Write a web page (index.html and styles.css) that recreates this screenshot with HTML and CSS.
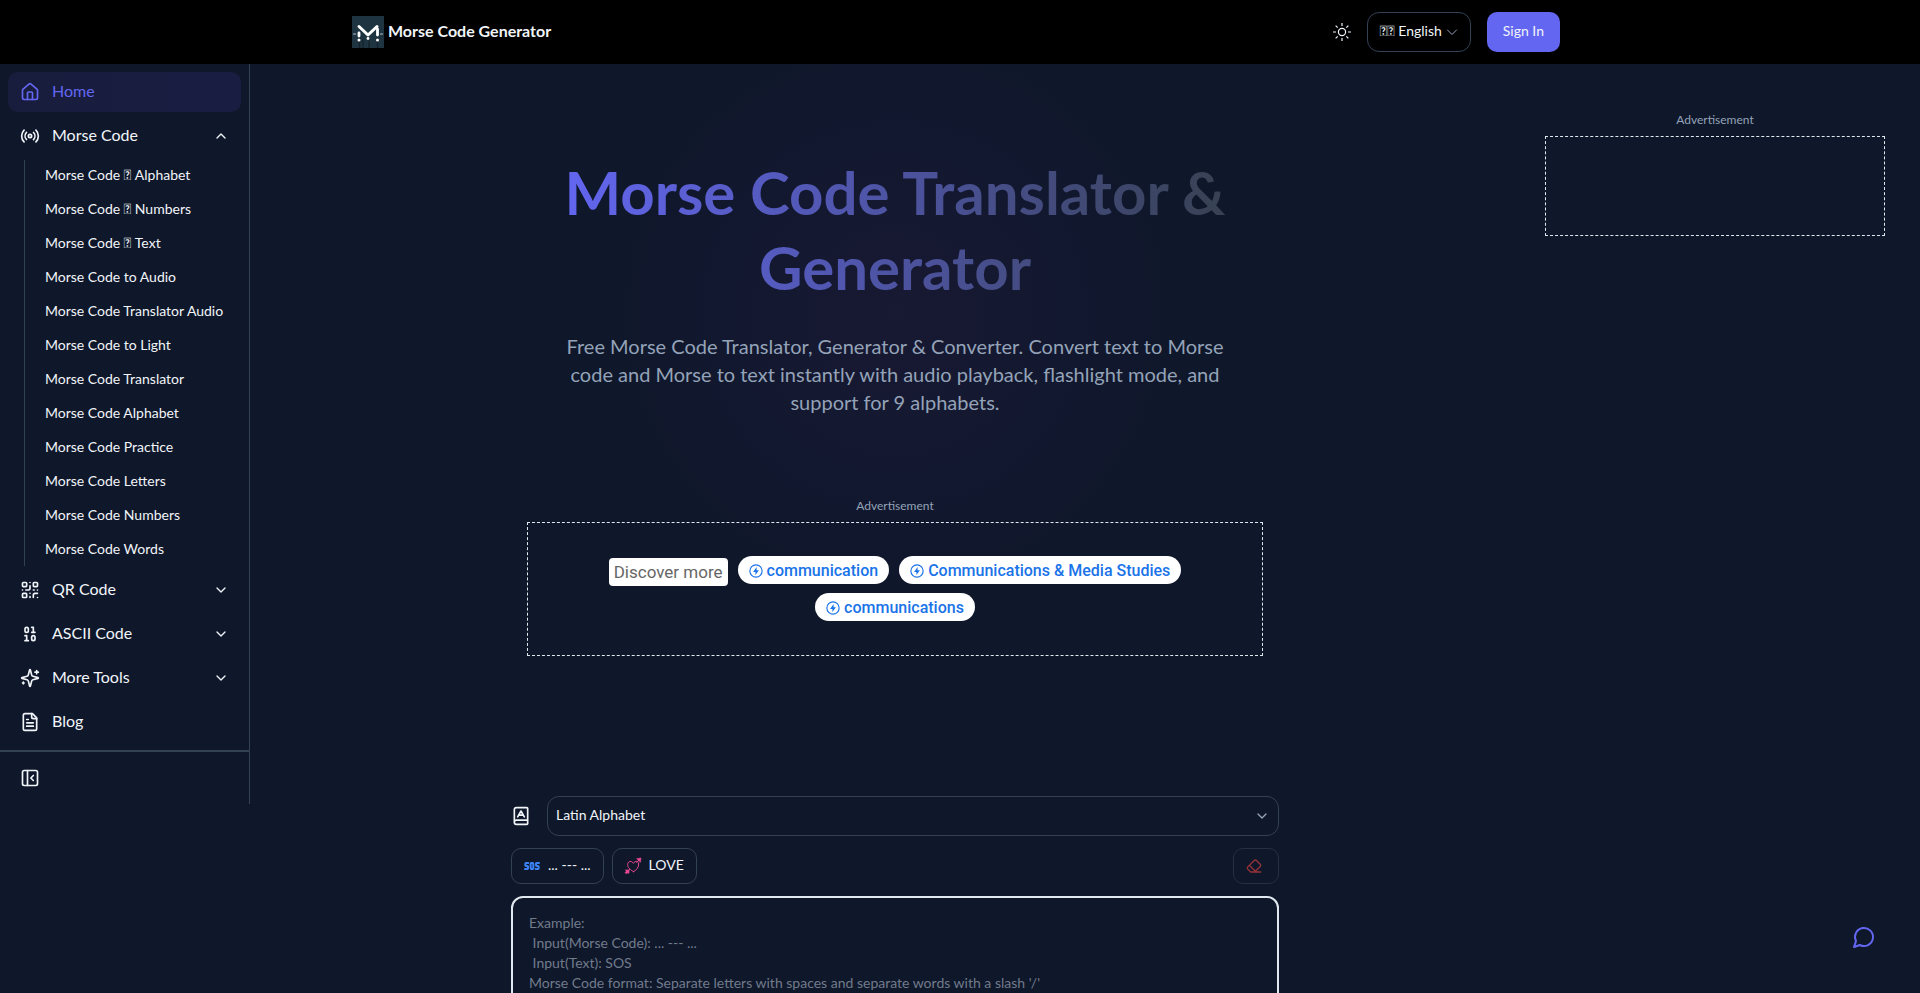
FILE: index.html
```html
<!DOCTYPE html>
<html lang="en">
<head>
<meta charset="utf-8">
<meta name="viewport" content="width=device-width, initial-scale=1">
<title>Morse Code Translator &amp; Generator</title>
<link rel="stylesheet" href="styles.css">
</head>
<body>

<header class="header">
  <div class="header-inner">
    <a href="#" class="brand">
      <svg class="brand-logo" viewBox="0 0 32 32" aria-hidden="true">
        <rect width="32" height="32" fill="#1e3441"/>
        <path d="M7.500 21v11M11 24v8M17 25v7M25.500 21v11" stroke="#14232e" stroke-width="1.500"/>
        <g fill="none" stroke="#fff" stroke-linecap="round">
          <path d="M7 10.500l9 8.500 9-8.500" stroke-width="3"/>
          <path d="M7 17v3M25.500 13v6" stroke-width="2.800"/>
          <path d="M1.500 18h2M28.500 18h2" stroke="#b9c5cc" stroke-width="1.200"/>
        </g>
        <g fill="#fff">
          <circle cx="7" cy="24" r="1.500"/>
          <circle cx="16" cy="22.500" r="1.400"/>
          <circle cx="25.500" cy="24" r="1.500"/>
        </g>
      </svg>
      <span>Morse Code Generator</span>
    </a>
    <div class="header-actions">
      <button type="button" class="theme-button" aria-label="Toggle theme">
        <svg class="icon-18" viewBox="0 0 15 15">
          <circle cx="7.500" cy="7.500" r="3"/>
          <path d="M7.500 0v2.500M7.500 12.500V15M0 7.500h2.500M12.500 7.500H15M2.200 2.200l1.700 1.700M11.100 11.100l1.700 1.700M2.200 12.800l1.700-1.700M11.100 3.900l1.700-1.700"/>
        </svg>
      </button>
      <button type="button" class="language-button">
        <span>&#x10F000;&#x10F000; English</span>
        <svg class="icon-12" viewBox="0 0 24 24"><path d="m3 8 9 9 9-9"/></svg>
      </button>
      <button type="button" class="signin-button">Sign In</button>
    </div>
  </div>
</header>

<div class="layout">

  <aside class="sidebar">
    <nav class="menu">
      <a href="#" class="menu-item active">
        <svg class="icon-20" viewBox="0 0 24 24"><path d="M15 21v-8a1 1 0 0 0-1-1h-4a1 1 0 0 0-1 1v8"/><path d="M3 10a2 2 0 0 1 .709-1.528l7-5.999a2 2 0 0 1 2.582 0l7 5.999A2 2 0 0 1 21 10v9a2 2 0 0 1-2 2H5a2 2 0 0 1-2-2z"/></svg>
        <span>Home</span>
      </a>
      <button type="button" class="menu-item" aria-expanded="true">
        <svg class="icon-20" viewBox="0 0 24 24"><path d="M4.900 19.100C1 15.200 1 8.800 4.900 4.900M7.800 16.200c-2.300-2.300-2.300-6.100 0-8.500M16.200 7.800c2.300 2.300 2.300 6.100 0 8.500M19.100 4.900C23 8.800 23 15.100 19.100 19"/><circle cx="12" cy="12" r="2"/></svg>
        <span>Morse Code</span>
        <svg class="icon-16 chevron" viewBox="0 0 24 24"><path d="m18 15-6-6-6 6"/></svg>
      </button>
      <div class="submenu">
        <a href="#">Morse Code &#x10F000; Alphabet</a>
        <a href="#">Morse Code &#x10F000; Numbers</a>
        <a href="#">Morse Code &#x10F000; Text</a>
        <a href="#">Morse Code to Audio</a>
        <a href="#">Morse Code Translator Audio</a>
        <a href="#">Morse Code to Light</a>
        <a href="#">Morse Code Translator</a>
        <a href="#">Morse Code Alphabet</a>
        <a href="#">Morse Code Practice</a>
        <a href="#">Morse Code Letters</a>
        <a href="#">Morse Code Numbers</a>
        <a href="#">Morse Code Words</a>
      </div>
      <button type="button" class="menu-item" aria-expanded="false">
        <svg class="icon-20" viewBox="0 0 24 24"><rect width="5" height="5" x="3" y="3" rx="1"/><rect width="5" height="5" x="16" y="3" rx="1"/><rect width="5" height="5" x="3" y="16" rx="1"/><path d="M21 16h-3a2 2 0 0 0-2 2v3M21 21v.01M12 7v3a2 2 0 0 1-2 2H7M3 12h.01M12 3h.01M12 16v.01M16 12h1M21 12v.01M12 21v-1"/></svg>
        <span>QR Code</span>
        <svg class="icon-16 chevron" viewBox="0 0 24 24"><path d="m6 9 6 6 6-6"/></svg>
      </button>
      <button type="button" class="menu-item" aria-expanded="false">
        <svg class="icon-20" viewBox="0 0 24 24"><rect x="14" y="14" width="4" height="6" rx="2"/><rect x="6" y="4" width="4" height="6" rx="2"/><path d="M6 20h4M14 10h4M6 14h2v6M14 4h2v6"/></svg>
        <span>ASCII Code</span>
        <svg class="icon-16 chevron" viewBox="0 0 24 24"><path d="m6 9 6 6 6-6"/></svg>
      </button>
      <button type="button" class="menu-item" aria-expanded="false">
        <svg class="icon-20" viewBox="0 0 24 24"><path d="M9.937 15.500A2 2 0 0 0 8.500 14.063l-6.135-1.582a.5.5 0 0 1 0-.962L8.500 9.936A2 2 0 0 0 9.937 8.500l1.582-6.135a.5.5 0 0 1 .963 0L14.063 8.500A2 2 0 0 0 15.500 9.937l6.135 1.581a.5.5 0 0 1 0 .964L15.500 14.063a2 2 0 0 0-1.437 1.437l-1.582 6.135a.5.5 0 0 1-.963 0z"/><path d="M20 3v4M22 5h-4M4 17v2M5 18H3"/></svg>
        <span>More Tools</span>
        <svg class="icon-16 chevron" viewBox="0 0 24 24"><path d="m6 9 6 6 6-6"/></svg>
      </button>
      <a href="#" class="menu-item">
        <svg class="icon-20" viewBox="0 0 24 24"><path d="M15 2H6a2 2 0 0 0-2 2v16a2 2 0 0 0 2 2h12a2 2 0 0 0 2-2V7Z"/><path d="M14 2v4a2 2 0 0 0 2 2h4M10 9H8M16 13H8M16 17H8"/></svg>
        <span>Blog</span>
      </a>
    </nav>
    <div class="sidebar-footer">
      <button type="button" class="collapse-button" aria-label="Collapse sidebar">
        <svg class="icon-20" viewBox="0 0 24 24"><rect width="18" height="18" x="3" y="3" rx="2"/><path d="M9 3v18M16 15l-3-3 3-3"/></svg>
      </button>
    </div>
  </aside>

  <main class="content">
    <section class="hero">
      <h1>Morse Code Translator &amp; Generator</h1>
      <p>Free Morse Code Translator, Generator &amp; Converter. Convert text to Morse code and Morse to text instantly with audio playback, flashlight mode, and support for 9 alphabets.</p>
    </section>

    <section class="ad ad-main">
      <div class="ad-label">Advertisement</div>
      <div class="ad-box">
        <div class="ad-terms">
          <span class="ad-title">Discover more</span>
          <a href="#" class="ad-chip">
            <svg class="chip-icon" viewBox="0 0 24 24"><circle cx="12" cy="12" r="10.500"/><path class="bolt" d="M13 5 7 13.500H11V19L17 10.500H13z"/></svg>
            <span>communication</span>
          </a>
          <a href="#" class="ad-chip">
            <svg class="chip-icon" viewBox="0 0 24 24"><circle cx="12" cy="12" r="10.500"/><path class="bolt" d="M13 5 7 13.500H11V19L17 10.500H13z"/></svg>
            <span>Communications &amp; Media Studies</span>
          </a>
          <a href="#" class="ad-chip">
            <svg class="chip-icon" viewBox="0 0 24 24"><circle cx="12" cy="12" r="10.500"/><path class="bolt" d="M13 5 7 13.500H11V19L17 10.500H13z"/></svg>
            <span>communications</span>
          </a>
        </div>
      </div>
    </section>

    <section class="translator">
      <div class="alphabet-row">
        <label for="alphabet" aria-label="Alphabet">
          <svg class="icon-20" viewBox="0 0 24 24"><path d="M4 19.500v-15A2.500 2.500 0 0 1 6.500 2H19a1 1 0 0 1 1 1v18a1 1 0 0 1-1 1H6.500a1 1 0 0 1 0-5H20"/><path d="m8 13 4-7 4 7M9.100 11h5.700"/></svg>
        </label>
        <div class="select-wrap">
          <select id="alphabet">
            <option>Latin Alphabet</option>
          </select>
          <svg class="icon-16 select-arrow" viewBox="0 0 24 24"><path d="m6 9 6 6 6-6"/></svg>
        </div>
      </div>

      <div class="examples-row">
        <button type="button" class="example-button">
          <svg class="icon-16 sos" viewBox="0 0 24 24"><path d="M6.500 7.500H3a1 1 0 0 0-1 1v2.500a1 1 0 0 0 1 1h2a1 1 0 0 1 1 1v2.500a1 1 0 0 1-1 1H1.500M22.500 7.500H19a1 1 0 0 0-1 1v2.500a1 1 0 0 0 1 1h2a1 1 0 0 1 1 1v2.500a1 1 0 0 1-1 1h-3.500"/><rect x="10" y="7.500" width="4" height="9" rx="1"/></svg>
          <span>... --- ...</span>
        </button>
        <button type="button" class="example-button">
          <svg class="icon-16 love" viewBox="0 0 24 24"><path d="M13 20.500C8 18 3.500 14 4 9.500 4.500 4.500 10 3.500 12.500 8c3-4.500 8-3.500 8 1 0 5-3 9-7.500 11.500zM17.500 6.500 22 2M1.500 22.500 7 17"/><path class="fill" d="M18 1 24 0l-1 6zM1 18h5v5l-2-1-2 2v-2H0l2-2z"/></svg>
          <span>LOVE</span>
        </button>
        <button type="button" class="example-button clear-button" aria-label="Clear" disabled>
          <svg class="icon-16" viewBox="0 0 24 24"><path d="m7 21-4.300-4.300c-1-1-1-2.500 0-3.400l9.600-9.600c1-1 2.500-1 3.400 0l5.600 5.600c1 1 1 2.500 0 3.400L13 21M22 21H7M5 11l9 9"/></svg>
        </button>
      </div>

      <textarea class="input-text" aria-label="Input" placeholder="Example:
 Input(Morse Code): ... --- ...
 Input(Text): SOS
Morse Code format: Separate letters with spaces and separate words with a slash '/'"></textarea>
    </section>
  </main>

  <aside class="ad ad-side">
    <div class="ad-label">Advertisement</div>
    <div class="ad-box"></div>
  </aside>

</div>

<button type="button" class="chat-button" aria-label="Open chat">
  <svg class="icon-24" viewBox="0 0 24 24"><path d="M7.900 20A9 9 0 1 0 4 16.100L2 22Z"/></svg>
</button>

</body>
</html>
```
FILE: styles.css
```css
* {
  box-sizing: border-box;
}

body {
  margin: 0;
  background-color: #0f172a;
  color: #f1f5f9;
  font-family: Lato, "Liberation Sans", sans-serif;
  font-size: 14px;
  line-height: 20px;
}

a {
  color: inherit;
  text-decoration: none;
}

button,
select,
textarea {
  font: inherit;
  color: inherit;
}

button {
  border: none;
  background: none;
  cursor: pointer;
}

h1,
p {
  margin: 0;
}

svg {
  display: block;
  flex-shrink: 0;
  fill: none;
  stroke: currentColor;
  stroke-width: 2;
  stroke-linecap: round;
  stroke-linejoin: round;
}

.icon-12 { width: 12px; height: 12px; }
.icon-16 { width: 16px; height: 16px; }
.icon-18 { width: 18px; height: 18px; }
.icon-20 { width: 20px; height: 20px; }
.icon-24 { width: 24px; height: 24px; }

/* header */
.header {
  background-color: #000;
}

.header-inner {
  display: flex;
  align-items: center;
  justify-content: space-between;
  max-width: 1280px;
  height: 64px;
  margin: 0 auto;
  padding: 0 40px 0 32px;
}

.brand {
  display: flex;
  align-items: center;
  gap: 4px;
  font-size: 16px;
  font-weight: 700;
}

.brand-logo {
  width: 32px;
  height: 32px;
  stroke: none;
}

.brand span,
.language-button span,
.menu-item span,
.example-button span {
  padding-bottom: 2px;
}

.header-actions {
  display: flex;
  align-items: center;
  gap: 16px;
}

.theme-button {
  padding: 0;
}

.theme-button svg {
  stroke-width: 1;
  stroke-linecap: butt;
}

.language-button {
  display: flex;
  align-items: center;
  gap: 4px;
  height: 40px;
  padding: 0 12px;
  border: 1px solid #334155;
  border-radius: 12px;
}

.language-button svg {
  color: #94a3b8;
}

.signin-button {
  height: 40px;
  padding: 0 16px 2px;
  border-radius: 10px;
  background-color: #6366f1;
}

/* sidebar */
.layout {
  display: flex;
  align-items: flex-start;
}

.sidebar {
  flex: 0 0 250px;
  border-right: 1px solid #334155;
}

.menu {
  display: flex;
  flex-direction: column;
  gap: 4px;
  padding: 8px;
}

.menu-item {
  display: flex;
  align-items: center;
  gap: 12px;
  height: 40px;
  padding: 0 12px;
  border-radius: 10px;
  font-size: 16px;
  text-align: left;
}

.menu-item.active {
  background: linear-gradient(to right, #181d3d, #191d42);
  color: #6366f1;
}

.chevron {
  margin-left: auto;
}

.submenu {
  display: flex;
  flex-direction: column;
  gap: 2px;
  margin-left: 16px;
  padding-left: 8px;
  border-left: 1px solid #334155;
}

.submenu a {
  padding: 5px 12px 7px;
  white-space: nowrap;
}

.sidebar-footer {
  padding: 8px;
  border-top: 2px solid #334155;
}

.collapse-button {
  display: flex;
  align-items: center;
  height: 36px;
  padding: 0 12px;
}

/* main column */
.content {
  flex: 1;
  min-width: 0;
  padding: 91px 16px 40px;
  background: radial-gradient(circle 310px at 50% 250px, #181932, #12182f 55%, #0f172a) no-repeat;
}

.hero {
  max-width: 672px;
  margin: 0 auto;
  text-align: center;
}

.hero h1 {
  background: linear-gradient(to right, #6366f1, #374151);
  background-clip: text;
  -webkit-background-clip: text;
  color: transparent;
  font-size: 60px;
  font-weight: 700;
  line-height: 75px;
}

.hero p {
  margin-top: 27px;
  color: #94a3b8;
  font-size: 20px;
  line-height: 28px;
}

.ad-label {
  margin-bottom: 8px;
  color: #94a3b8;
  font-size: 12px;
  line-height: 16px;
  text-align: center;
}

.ad-box {
  display: flex;
  align-items: center;
  justify-content: center;
  min-height: 100px;
  border: 1px dashed #e2e8f0;
}

.ad-main {
  max-width: 736px;
  margin: 82px auto 0;
}

.ad-main .ad-box {
  min-height: 134px;
  padding-bottom: 2px;
}

.ad-terms {
  display: flex;
  flex-wrap: wrap;
  align-items: flex-start;
  justify-content: center;
  gap: 7px 10px;
  max-width: 640px;
  font-family: Roboto, "Liberation Sans", sans-serif;
  font-size: 16px;
  line-height: 28px;
}

.ad-title {
  margin-top: 2px;
  padding: 0 5px;
  border-radius: 4px;
  background-color: #fff;
  color: #666;
  font-size: 17px;
}

.ad-chip {
  display: flex;
  align-items: center;
  gap: 4px;
  padding: 2px 11px 0;
  border-radius: 14px;
  background-color: #fff;
  color: #1a73e8;
  font-weight: 500;
  line-height: 26px;
}

.chip-icon {
  width: 14px;
  height: 14px;
}

.chip-icon .bolt {
  fill: currentColor;
  stroke: none;
}

.ad-side {
  flex: 0 0 380px;
  padding: 48px 35px 0 5px;
}

/* translator */
.translator {
  display: flex;
  flex-direction: column;
  gap: 12px;
  max-width: 768px;
  margin: 140px auto 0;
}

.alphabet-row {
  display: flex;
  align-items: center;
  gap: 16px;
}

.select-wrap {
  position: relative;
  flex: 1;
}

.select-wrap select {
  appearance: none;
  width: 100%;
  height: 40px;
  padding: 0 32px 2px 8px;
  border: 1px solid #334155;
  border-radius: 12px;
  background-color: transparent;
}

.select-wrap option {
  background-color: #0f172a;
}

.select-arrow {
  position: absolute;
  top: 12px;
  right: 9px;
  color: #94a3b8;
  pointer-events: none;
}

.examples-row {
  display: flex;
  gap: 8px;
}

.example-button {
  display: flex;
  align-items: center;
  gap: 8px;
  height: 36px;
  padding: 0 12px;
  border: 1px solid #334155;
  border-radius: 10px;
}

.sos {
  color: #3b82f6;
  stroke-width: 3;
}

.love {
  overflow: visible;
  color: #ec4899;
  stroke-width: 1.5;
}

.love .fill {
  fill: currentColor;
  stroke-width: 1;
}

.clear-button {
  margin-left: auto;
  padding: 0 16px 0 12px;
  color: #ef4444;
  opacity: 0.6;
}

.input-text {
  display: block;
  width: 100%;
  height: 200px;
  padding: 15px 16px;
  border: 2px solid #e2e8f0;
  border-radius: 12px;
  background-color: transparent;
  resize: none;
}

.input-text::placeholder {
  color: #717b8c;
}

.chat-button {
  position: fixed;
  right: 32px;
  bottom: 32px;
  padding: 12px;
  color: #6366f1;
}
```
